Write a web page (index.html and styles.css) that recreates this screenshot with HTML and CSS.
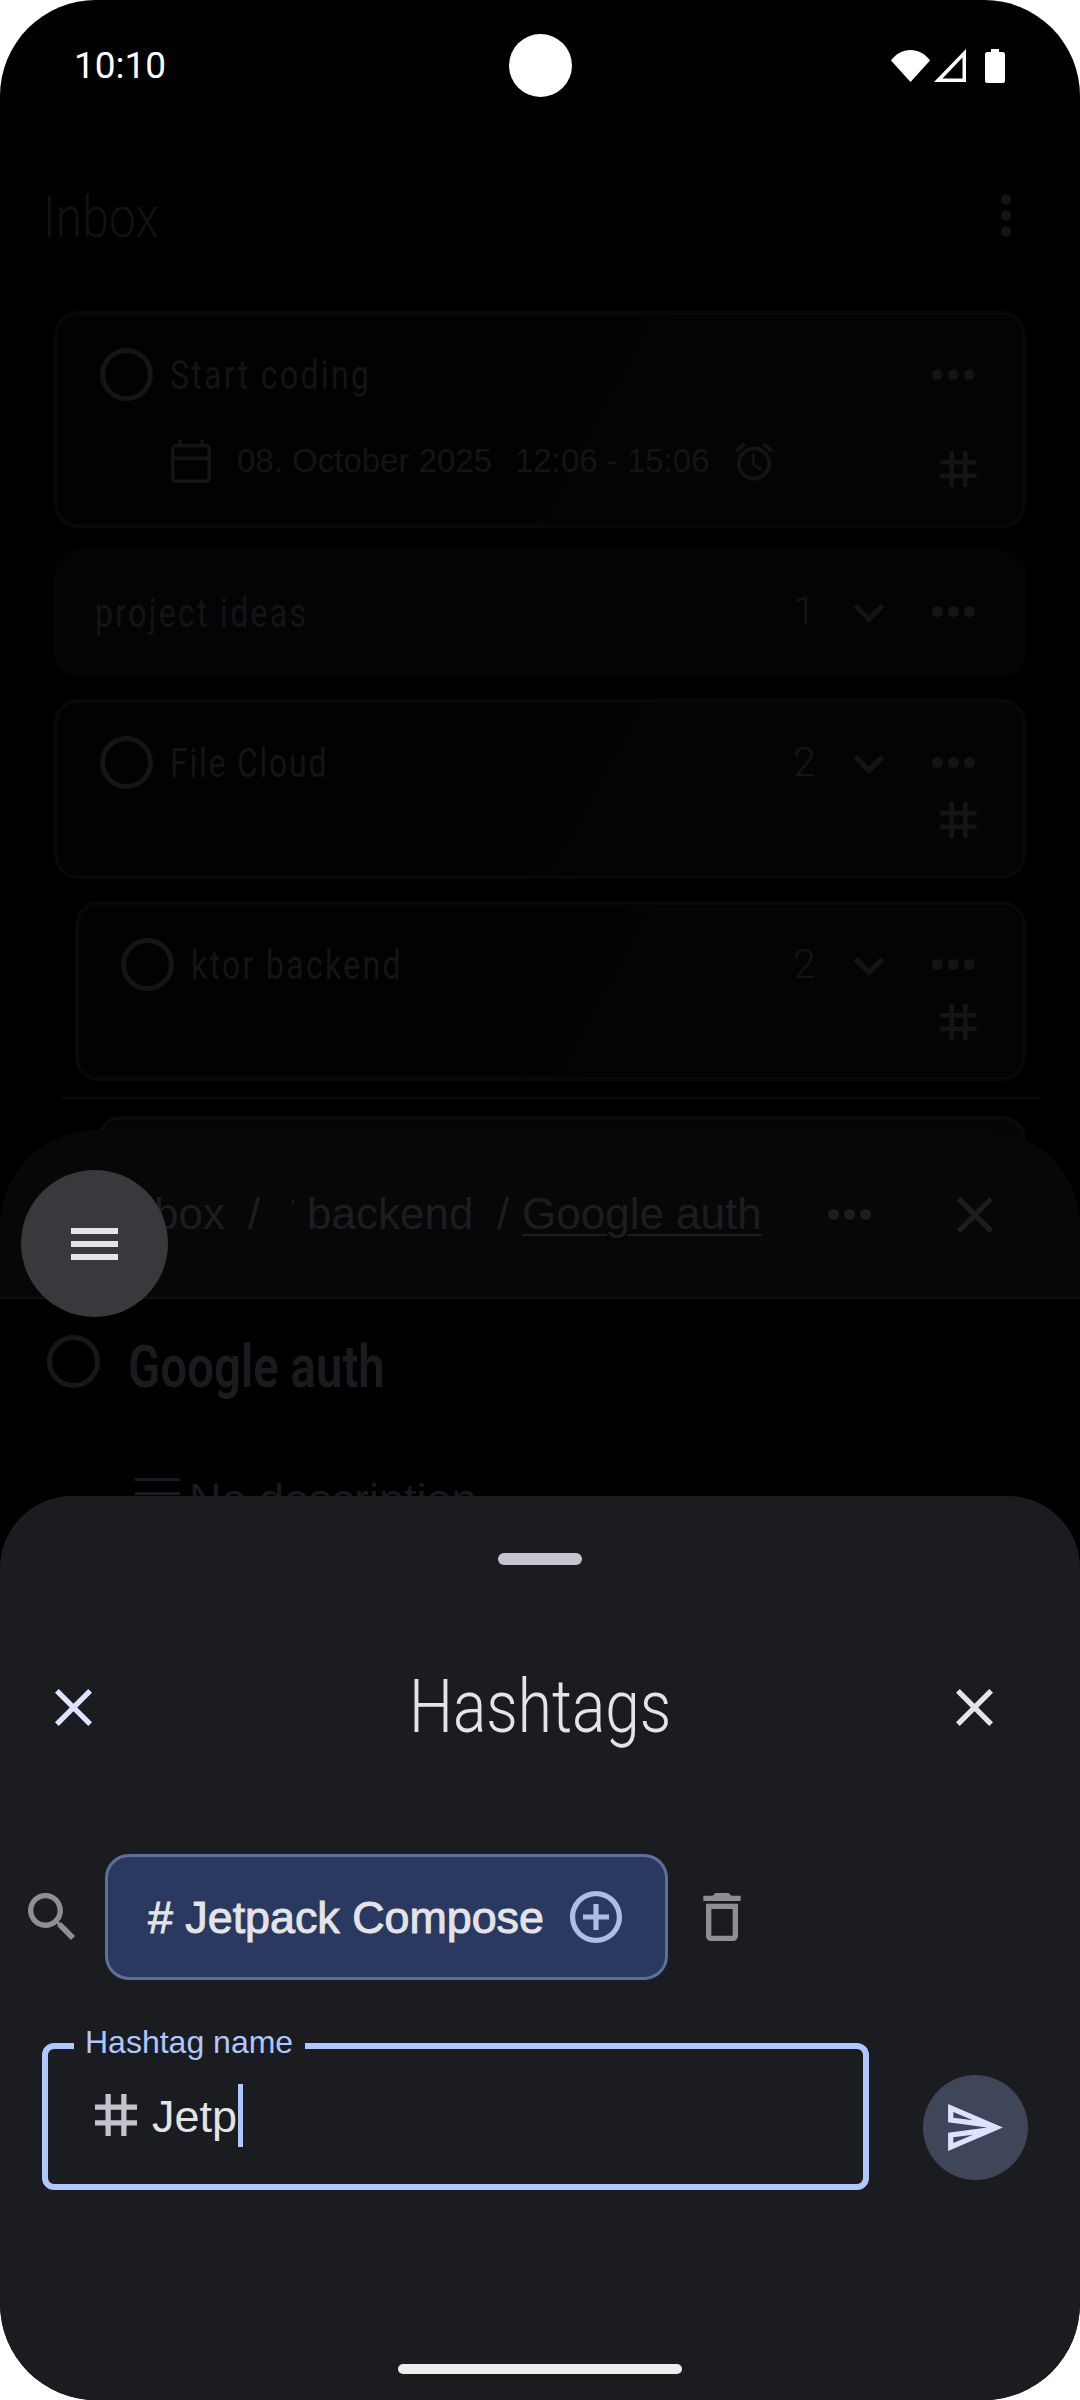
FILE: index.html
```html
<!DOCTYPE html>
<html lang="en">
<head>
<meta charset="utf-8">
<title>Hashtags</title>
<link rel="stylesheet" href="styles.css">
</head>
<body>
<div class="screen">
  <svg width="0" height="0" class="defs">
    <symbol id="i-close" viewBox="0 0 24 24"><path d="M19 6.41L17.59 5 12 10.59 6.41 5 5 6.41 10.59 12 5 17.59 6.41 19 12 13.41 17.59 19 19 17.59 13.41 12z"/></symbol>
    <symbol id="i-tag" viewBox="4 4 16 16"><path d="M20 10V8h-4V4h-2v4h-4V4H8v4H4v2h4v4H4v2h4v4h2v-4h4v4h2v-4h4v-2h-4v-4h4zm-6 4h-4v-4h4v4z"/></symbol>
    <symbol id="i-more" viewBox="0 0 43 11"><circle cx="5.5" cy="5.5" r="5.5"/><circle cx="21.5" cy="5.5" r="5.5"/><circle cx="37.5" cy="5.5" r="5.5"/></symbol>
    <symbol id="i-chev" viewBox="6 8.6 12 7.4"><path d="M16.59 8.59L12 13.17 7.41 8.59 6 10l6 6 6-6z"/></symbol>
  </svg>

  <header class="status">
    <span class="clock">10:10</span>
    <div class="status-icons">
      <svg class="st-wifi" viewBox="0 0 39 33"><path d="M0 11.5C5 4.5 12 1 19.5 1S34 4.500 39 11.500L19.500 33z"/></svg>
      <svg class="st-signal" viewBox="0 0 32 33"><path d="M32 0v33H0zM28.500 8.500L8.500 29.500h20z" fill-rule="evenodd"/></svg>
      <svg class="st-batt" viewBox="0 0 20 34"><path d="M6 0h8v3h3.500Q20 3 20 5.500V31.500Q20 34 17.500 34H2.500Q0 34 0 31.500V5.500Q0 3 2.500 3H6z"/></svg>
    </div>
  </header>
  <div class="camera"></div>

  <div class="top-bar">
    <h1 class="inbox-title narrow">Inbox</h1>
    <div class="vdots"><i></i><i></i><i></i></div>
  </div>

  <div class="list">
    <section class="card card-a">
      <div class="row">
        <span class="ring"></span>
        <span class="task narrow">Start coding</span>
        <svg class="more"><use href="#i-more"/></svg>
      </div>
      <div class="row row-meta">
        <svg class="cal" viewBox="0 0 40 43"><rect x="1.75" y="5.75" width="36.500" height="35.500" rx="3" fill="none" stroke="currentColor" stroke-width="3.500"/><path d="M0 16.500h40v3.500H0zM7 0h3.500v6H7zM29.500 0H33v6h-3.500z"/></svg>
        <span class="meta meta-date">08. October 2025</span>
        <span class="meta meta-time">12:06 - 15:06</span>
        <svg class="alarm" viewBox="2 1.860 20 20.140"><path d="M22 5.720l-4.600-3.860-1.290 1.530 4.600 3.860L22 5.720zM7.880 3.390L6.600 1.860 2 5.710l1.290 1.530 4.590-3.850zM12.500 8H11v6l4.750 2.850.75-1.230-4-2.370V8zM12 4c-4.970 0-9 4.030-9 9s4.030 9 9 9c4.970 0 9-4.030 9-9s-4.030-9-9-9zm0 16c-3.870 0-7-3.130-7-7s3.130-7 7-7 7 3.130 7 7-3.130 7-7 7z"/></svg>
        <svg class="hash hash-a"><use href="#i-tag"/></svg>
      </div>
    </section>

    <section class="card card-b">
      <div class="row">
        <span class="task narrow">project ideas</span>
        <span class="count">1</span>
        <svg class="chev"><use href="#i-chev"/></svg>
        <svg class="more"><use href="#i-more"/></svg>
      </div>
    </section>

    <section class="card card-c">
      <div class="row">
        <span class="ring"></span>
        <span class="task narrow task-tight">File Cloud</span>
        <span class="count">2</span>
        <svg class="chev"><use href="#i-chev"/></svg>
        <svg class="more"><use href="#i-more"/></svg>
      </div>
      <div class="row row-hash"><svg class="hash"><use href="#i-tag"/></svg></div>
    </section>

    <section class="card card-c card-nested">
      <div class="row">
        <span class="ring"></span>
        <span class="task narrow">ktor backend</span>
        <span class="count">2</span>
        <svg class="chev"><use href="#i-chev"/></svg>
        <svg class="more"><use href="#i-more"/></svg>
      </div>
      <div class="row row-hash"><svg class="hash"><use href="#i-tag"/></svg></div>
    </section>
  </div>

  <div class="peek-line"></div>
  <div class="peek-card"></div>

  <section class="detail">
    <div class="crumbs">
      <span class="crumb c-box">box</span>
      <span class="crumb c-sl">/</span>
      <span class="crumb c-tick">'</span>
      <span class="crumb c-back">backend</span>
      <span class="crumb c-sl2">/</span>
      <span class="crumb c-now">Google auth</span>
      <svg class="more more-d"><use href="#i-more"/></svg>
      <svg class="close-d" viewBox="5 5 14 14"><use href="#i-close" x="0" y="0" width="24" height="24"/></svg>
    </div>
  </section>

  <div class="detail-body">
    <div class="detail-title">
      <span class="ring ring-d"></span>
      <h2 class="gauth narrow">Google auth</h2>
    </div>
    <div class="desc">
      <div class="desc-ico"><i></i><i></i><i></i></div>
      <span class="desc-text">No description</span>
    </div>
  </div>

  <button class="fab" aria-label="Menu"><i></i><i></i><i></i></button>

  <section class="sheet">
    <div class="handle"></div>
    <div class="sheet-head">
      <svg class="x x-l" viewBox="5 5 14 14"><use href="#i-close" width="24" height="24"/></svg>
      <h2 class="sheet-title narrow">Hashtags</h2>
      <svg class="x x-r" viewBox="5 5 14 14"><use href="#i-close" width="24" height="24"/></svg>
    </div>
    <div class="chips">
      <svg class="search" viewBox="3 3 17.490 17.490"><path d="M15.500 14h-.79l-.28-.27C15.410 12.590 16 11.110 16 9.500 16 5.910 13.090 3 9.500 3S3 5.910 3 9.500 5.910 16 9.500 16c1.610 0 3.090-.59 4.230-1.570l.27.28v.79l5 4.990L20.490 19l-4.990-5zm-6 0C7.010 14 5 11.990 5 9.500S7.010 5 9.500 5 14 7.010 14 9.500 11.990 14 9.500 14z"/></svg>
      <div class="chip">
        <span class="chip-text"># Jetpack Compose</span>
        <svg class="chip-add" viewBox="2 2 20 20"><path d="M13 7h-2v4H7v2h4v4h2v-4h4v-2h-4V7zm-1-5C6.480 2 2 6.480 2 12s4.480 10 10 10 10-4.480 10-10S17.520 2 12 2zm0 18c-4.410 0-8-3.590-8-8s3.590-8 8-8 8 3.590 8 8-3.590 8-8 8z"/></svg>
      </div>
      <svg class="trash" viewBox="5 3 14 18"><path d="M6 19c0 1.100.9 2 2 2h8c1.100 0 2-.9 2-2V7H6v12zM8 9h8v10H8V9zm7.500-5l-1-1h-5l-1 1H5v2h14V4z"/></svg>
    </div>
    <div class="input-row">
      <div class="field">
        <span class="field-label">Hashtag name</span>
        <svg class="field-hash"><use href="#i-tag"/></svg>
        <span class="field-value">Jetp</span><span class="caret"></span>
      </div>
      <button class="send" aria-label="Send">
        <svg viewBox="2 3 21 18"><path d="M4.010 6.030l7.510 3.220-7.520-1 .01-2.220m7.500 8.720L4 17.970v-2.220l7.510-1M2.010 3L2 10l15 2-15 2 .01 7L23 12 2.010 3z"/></svg>
      </button>
    </div>
    <div class="home-bar"></div>
  </section>
</div>
</body>
</html>
```
FILE: styles.css
```css
* { box-sizing: border-box; }
html, body { margin: 0; padding: 0; background: #fff; }
body { width: 1080px; height: 2400px; overflow: hidden; font-family: "Liberation Sans", sans-serif; }
h1, h2 { margin: 0; font-weight: 400; }
svg { display: block; flex: none; fill: currentColor; }
.defs { position: absolute; }
.narrow { font-family: "Roboto", sans-serif; font-weight: 300; transform-origin: left center; }

.screen { position: relative; width: 1080px; height: 2400px; background: #000; border-radius: 96px; overflow: hidden; color: #131416; }

.status { height: 130px; display: flex; justify-content: space-between; padding: 44px 75px 0 74px; color: #fff; }
.clock { font-family: "Roboto", sans-serif; font-size: 37px; line-height: 44px; }
.status-icons { display: flex; gap: 4px; padding: 5px 0 0; height: 44px; }
.st-wifi { width: 39px; height: 33px; }
.st-signal { width: 32px; height: 33px; }
.st-batt { width: 20px; height: 34px; margin-left: 15px; }
.camera { position: absolute; left: 509px; top: 34px; width: 63px; height: 63px; border-radius: 50%; background: #fff; }

.top-bar { height: 181px; display: flex; justify-content: space-between; padding: 55px 69px 0 43px; }
.inbox-title { font-size: 58px; line-height: 64px; color: #101113; transform: scaleX(.83); }
.vdots { display: flex; flex-direction: column; gap: 5px; padding-top: 9px; }
.vdots i { width: 10px; height: 11px; border-radius: 50%; background: #131416; }

.list { display: flex; flex-direction: column; gap: 22px; padding: 0 54px; }
.card { border: 4px solid #070808; border-radius: 24px; background: linear-gradient(118deg, #020202 0%, #020202 52%, #040404 58%, #040404 100%); padding: 33px 47px 0 42px; }
.card-a { height: 217px; }
.card-b { height: 127px; background: #060307; border-color: #060307; padding: 31px 47px 0 37px; }
.card-c { height: 180px; }
.card-nested { margin-left: 21px; }
.row { display: flex; align-items: center; }
.ring { width: 53px; height: 53px; border: 5px solid #141516; border-radius: 50%; flex: none; }
.task { font-size: 40px; font-weight: 400; line-height: 53px; margin-left: 17px; flex: 1; color: #131416; letter-spacing: 2.900px; transform: scaleX(.8) translateY(1px); }
.task-tight { letter-spacing: 2.200px; }
.card-b .task { margin-left: 0; transform: scaleX(.8) translateY(2px); }
.count { font-family: "Roboto", sans-serif; font-weight: 300; font-size: 41px; line-height: 53px; width: 46px; color: #131416; }
.chev { width: 32px; height: 19px; margin: 4px 47px 0 14px; color: #131416; }
.more { width: 43px; height: 11px; color: #131416; }
.row-meta { margin-top: 34px; padding-left: 71px; }
.cal { width: 40px; height: 43px; }
.meta { font-size: 33px; line-height: 40px; color: #131416; white-space: nowrap; }
.meta-date { margin-left: 26px; }
.meta-time { margin-left: 23px; }
.alarm { width: 38px; height: 41px; margin-left: 25px; }
.hash { width: 37px; height: 36px; }
.hash-a { margin: 16px -2px 0 auto; }
.row-hash { justify-content: flex-end; margin-top: 13px; margin-right: -2px; }

.peek-line { margin: 16px 40px 0 62px; height: 2px; background: #0c0c0c; }
.peek-card { margin: 17px 54px 0 97px; height: 40px; border-radius: 24px 24px 0 0; background: #050505; border: 4px solid #0a0a0a; border-bottom: 0; }

.detail { position: absolute; left: 0; right: 0; top: 1130px; height: 169px; background: #070707; border-radius: 96px 96px 0 0; border-bottom: 2px solid #0e0e0e; }
.crumbs { position: relative; height: 100%; font-size: 44px; color: #1c1d21; }
.crumb { position: absolute; top: 59px; line-height: 50px; white-space: nowrap; }
.c-box { left: 154px; }
.c-sl { left: 248px; }
.c-tick { left: 291px; font-size: 20px; top: 52px; }
.c-back { left: 307px; }
.c-sl2 { left: 497px; }
.c-now { left: 522px; text-decoration: underline; text-underline-offset: 5px; text-decoration-thickness: 2px; }
.more-d { position: absolute; left: 828px; top: 79px; color: #1c1d21; }
.close-d { position: absolute; left: 957px; top: 67px; width: 36px; height: 36px; color: #1c1d21; }

.detail-body { position: absolute; left: 47px; top: 1335px; }
.detail-title { display: flex; align-items: flex-start; }
.ring-d { border-color: #17181a; }
.gauth { margin-left: 28px; margin-top: -3px; font-size: 60px; line-height: 70px; font-weight: 600; color: #1a1b1e; transform: scaleX(.79); }
.desc { display: flex; align-items: flex-start; padding: 76px 0 0 88px; }
.desc-ico { display: flex; flex-direction: column; gap: 11px; width: 45px; }
.desc-ico i { height: 3px; background: #1a1b1e; }
.desc-text { margin-left: 9px; font-size: 45px; line-height: 44px; color: #1a1b1e; }

.fab { position: absolute; left: 21px; top: 1170px; width: 147px; height: 147px; border: 0; border-radius: 50%; background: #38393d; display: flex; flex-direction: column; align-items: center; justify-content: center; gap: 7px; padding: 0; }
.fab i { display: block; width: 47px; height: 6px; background: #e3e3e8; }

.sheet { position: absolute; left: 0; right: 0; top: 1496px; bottom: 0; background: #1a1c20; border-radius: 72px 72px 96px 96px; display: flex; flex-direction: column; }
.handle { width: 84px; height: 12px; border-radius: 6px; background: #c4c5d0; margin: 57px auto 0; }
.sheet-head { display: grid; grid-template-columns: 1fr auto 1fr; align-items: center; margin-top: 102px; padding: 0 55px; height: 80px; color: #e3e3e8; }
.x { width: 37px; height: 37px; }
.x-l { color: #dde2ff; }
.x-r { justify-self: end; margin-right: 32px; }
.sheet-title { font-size: 74px; line-height: 80px; transform: scaleX(.84); transform-origin: center; }
.chips { display: flex; align-items: center; margin-top: 107px; padding-left: 28px; }
.search { width: 47px; height: 47px; color: #8e8f93; margin-top: -2px; }
.chip { margin-left: 30px; width: 563px; height: 126px; background: #29395f; border: 3px solid #5f6f9b; border-radius: 24px; display: flex; align-items: center; padding-left: 40px; }
.chip-text { font-size: 44.800px; -webkit-text-stroke: 1px #e3e3e8; color: #e3e3e8; white-space: nowrap; }
.chip-add { width: 52px; height: 52px; color: #adbde8; margin-left: 26px; }
.trash { width: 38px; height: 48px; margin: 0 0 0 35px; color: #8e8f93; }
.input-row { display: flex; margin-top: 63px; padding-left: 42px; }
.field { position: relative; width: 827px; height: 147px; border: 6px solid #b0c6ff; border-radius: 12px; display: flex; align-items: center; padding-left: 46px; }
.field-label { position: absolute; left: 26px; top: -23px; padding: 0 12px 0 11px; background: #1a1c20; font-size: 32px; line-height: 32px; color: #b0c6ff; }
.field-hash { width: 44px; height: 42px; color: #c4c5cc; margin-top: -3px; }
.field-value { font-size: 45px; margin-left: 14px; color: #e3e3e8; }
.caret { width: 5px; height: 63px; background: #b0c6ff; margin-left: 1px; margin-top: -3px; }
.send { margin: 32px 0 0 54px; width: 105px; height: 105px; border: 0; border-radius: 50%; background: #40455a; color: #dde2ff; display: flex; align-items: center; justify-content: center; padding: 0; }
.send svg { width: 55px; height: 47px; }
.home-bar { position: absolute; left: 398px; top: 868px; width: 284px; height: 10px; background: #eee; border-radius: 5px; }
```
